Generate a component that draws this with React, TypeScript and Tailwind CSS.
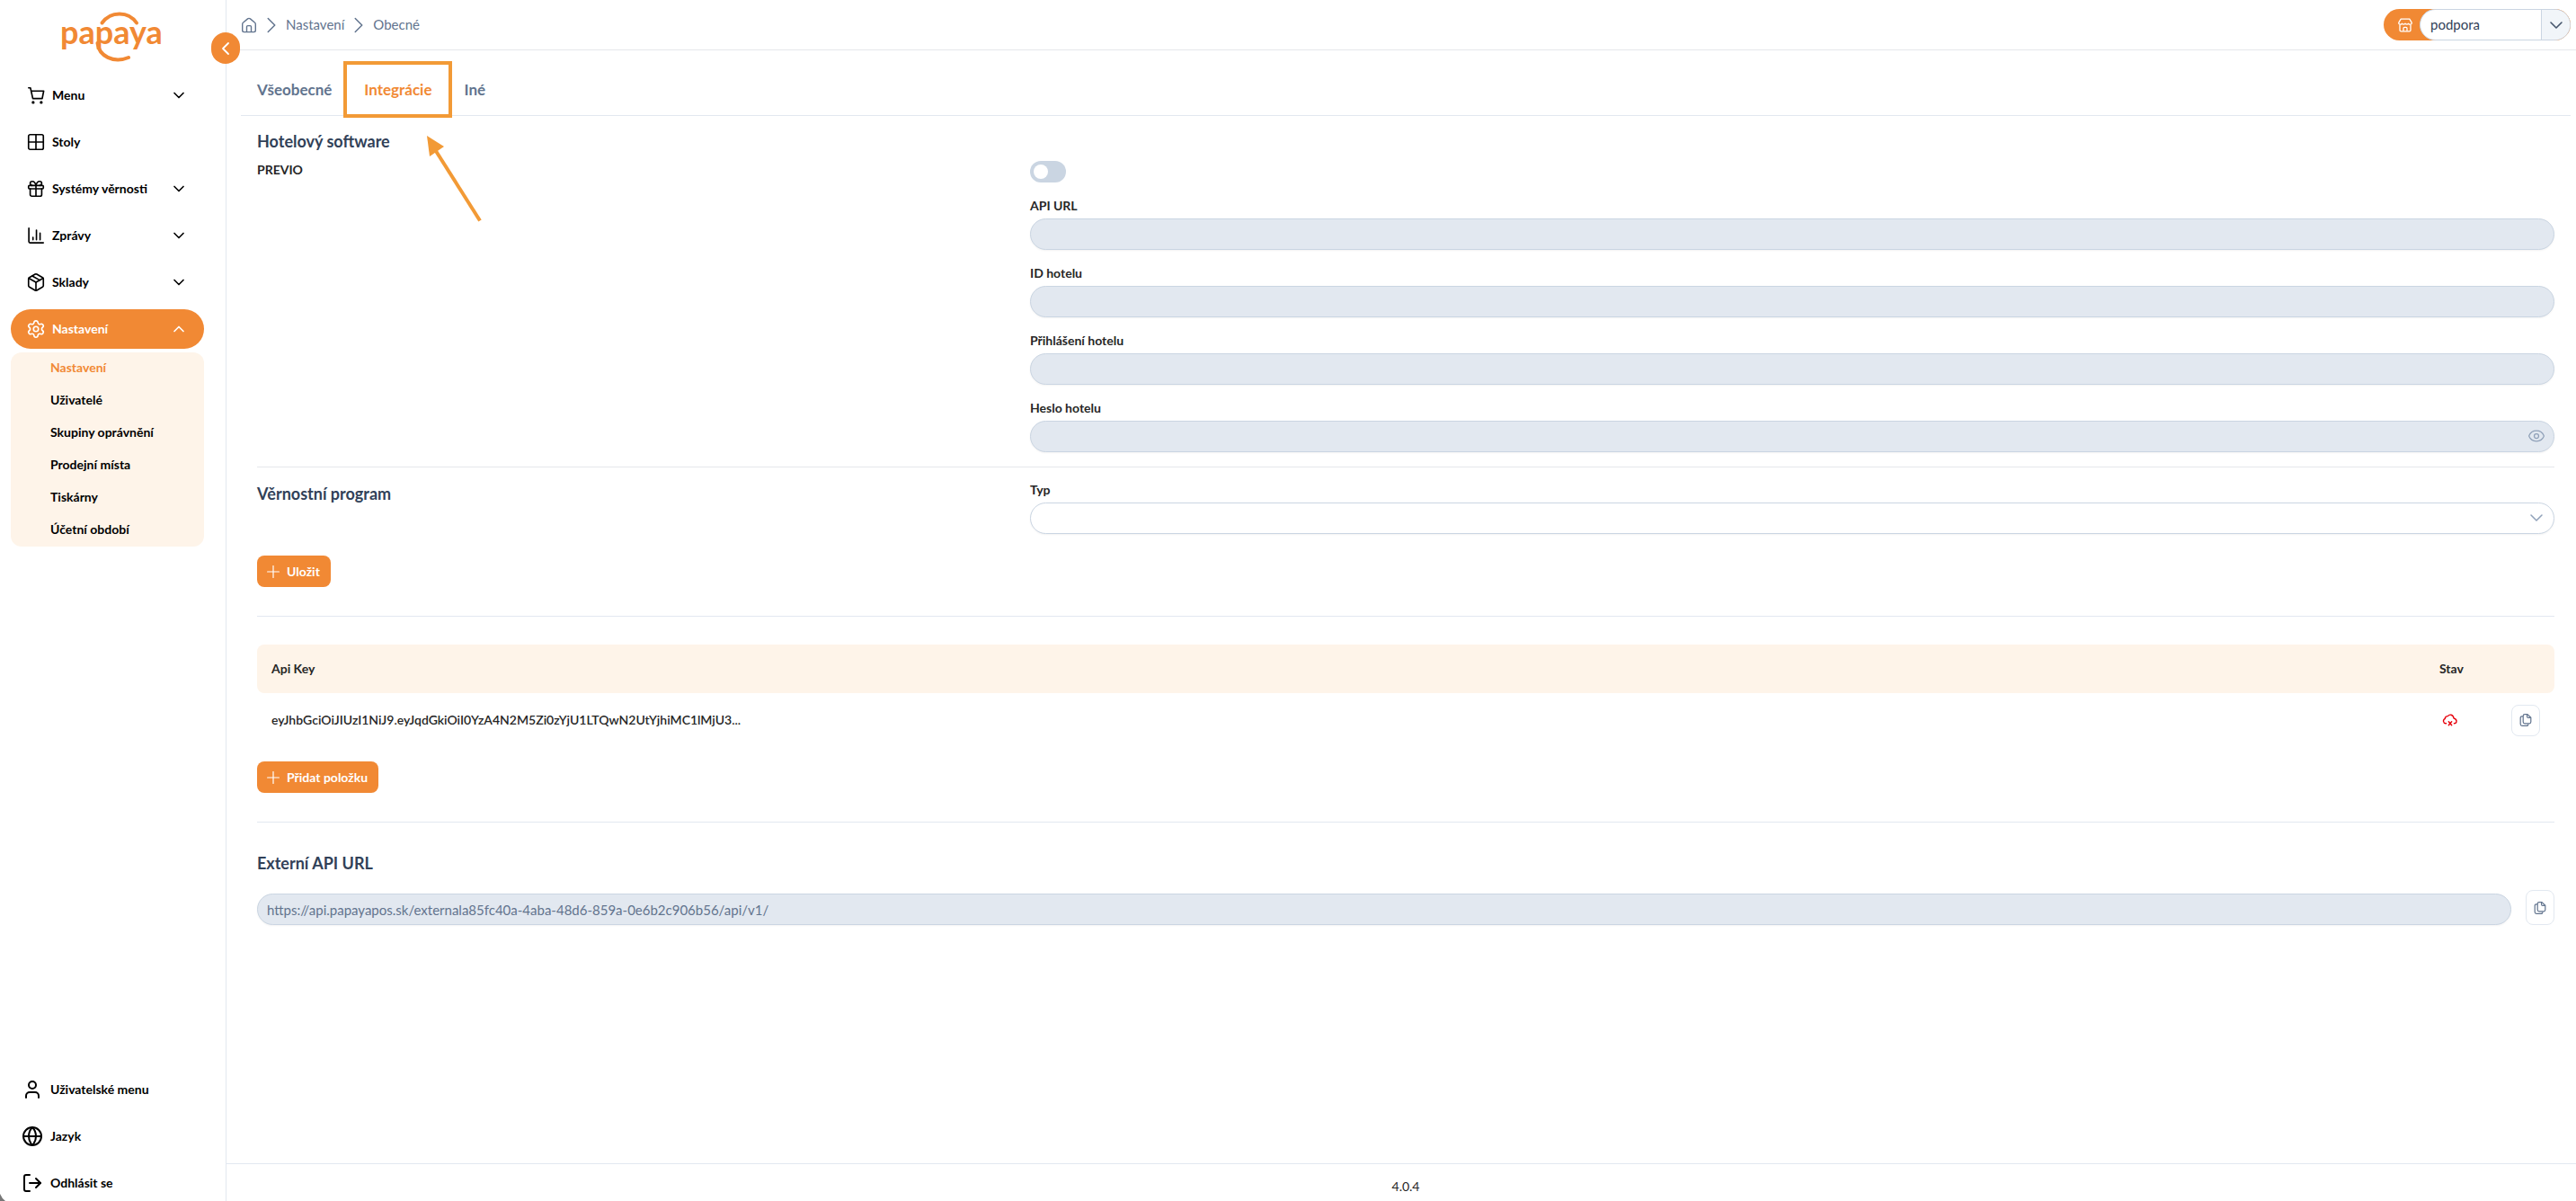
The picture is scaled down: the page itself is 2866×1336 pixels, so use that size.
import React, { useState } from 'react';
import {
  ChevronDown, ChevronLeft, ChevronRight, ChevronUp, Eye, Gift, Globe, Grid2x2, LogOut, Package, Plus, Settings, User,
} from 'lucide-react';

interface IconProps {
  className?: string;
}

const CartIcon: React.FC<IconProps> = ({ className }) => (
  <svg className={className} viewBox="0 0 24 24" fill="none" stroke="currentColor" strokeWidth="1.8" strokeLinecap="round" strokeLinejoin="round">
    <path d="M3 3H5.3L8.2 16H19.6L21.4 6.8H6.2" />
    <circle cx="8.6" cy="20.6" r="1.8" fill="currentColor" stroke="none" />
    <circle cx="18.4" cy="20.6" r="1.8" fill="currentColor" stroke="none" />
  </svg>
);

const ChartIcon: React.FC<IconProps> = ({ className }) => (
  <svg className={className} viewBox="0 0 24 24" fill="none" stroke="currentColor" strokeWidth="1.8" strokeLinecap="round" strokeLinejoin="round">
    <path d="M3.4 3V19.4a1.4 1.4 0 0 0 1.4 1.4H21" />
    <path d="M8.4 14.2v3M12.6 5.4v11.8M17 9v8.2" />
  </svg>
);

const HomeIcon: React.FC<IconProps> = ({ className }) => (
  <svg className={className} viewBox="0 0 18 18" fill="none" stroke="currentColor" strokeWidth="1.4" strokeLinejoin="round">
    <path d="M1.7 8C1.7 7.2 2 6.5 2.7 6L7.6 1.9Q9 .9 10.4 1.9L15.3 6C16 6.5 16.3 7.2 16.3 8V14.8Q16.3 16.6 14.5 16.6H3.5Q1.7 16.6 1.7 14.8Z" />
    <path d="M6.5 16.4V10.8Q6.5 9.6 7.7 9.6H10.3Q11.5 9.6 11.5 10.8V16.4" />
  </svg>
);

const StoreIcon: React.FC<IconProps> = ({ className }) => (
  <svg className={className} viewBox="0 0 16 16" fill="none" stroke="currentColor" strokeWidth="1.3" strokeLinejoin="round">
    <path d="M3.2 1.2H12.8L15.2 5.2Q15.4 7 13.6 7.2Q12.4 7.3 11.7 6.3Q9.9 8 8 6.3Q6.1 8 4.3 6.3Q3.6 7.3 2.4 7.2Q.6 7 .8 5.2Z" />
    <path d="M2 7.4V13.4Q2 14.8 3.4 14.8H12.6Q14 14.8 14 13.4V7.4" />
    <path d="M6 14.6V11.4Q6 10.4 7 10.4H9Q10 10.4 10 11.4V14.6" />
  </svg>
);

const CopyIcon: React.FC<IconProps> = ({ className }) => (
  <svg className={className} viewBox="0 0 14 16" fill="none" stroke="currentColor" strokeWidth="1.2" strokeLinejoin="round">
    <path d="M9 1.6H6Q4.2 1.6 4.2 3.4V10Q4.2 11.8 6 11.8H11Q12.8 11.8 12.8 10V5.2Z" />
    <path d="M8.6 1.8V4.2Q8.6 5.4 9.8 5.4H12.6" />
    <path d="M4 3.8H3Q1.2 3.8 1.2 5.6V12.6Q1.2 14.4 3 14.4H8Q9.8 14.4 9.8 12.4" />
  </svg>
);

const CloudErrorIcon: React.FC<IconProps> = ({ className }) => (
  <svg className={className} viewBox="0 0 18 18" fill="none" stroke="currentColor" strokeWidth="1.4" strokeLinecap="round" strokeLinejoin="round">
    <path d="M4.6 12.8H4A2.7 2.7 0 0 1 3.2 7.6Q3.4 4.6 6.4 4.6Q7.8 2.8 10 3.2Q12.6 3.8 13 7Q16.4 8 16 11Q15.6 12.8 13.4 12.8" />
    <path d="M7.3 10.8L10.7 14.8M10.7 10.8L7.3 14.8" />
  </svg>
);

const Logo = () => (
  <svg className="h-[60px] w-[120px]" viewBox="0 0 120 60" role="img" aria-label="papaya">
    <text x="60" y="38" textAnchor="middle" fontFamily="Lato, sans-serif" fontWeight="700" fontSize="36" fill="#f18934">
      papaya
    </text>
    <g fill="none" stroke="#f18934" strokeWidth="4" strokeLinecap="round">
      <path d="M49.5 14.5C59 1 79 1 88 14.5" />
      <path d="M44.5 37C46 51 62 60 79 53" />
    </g>
  </svg>
);

interface NavItem {
  label: string;
  icon: React.ElementType;
  expandable: boolean;
}

const NAV_ITEMS: NavItem[] = [
  { label: 'Menu', icon: CartIcon, expandable: true },
  { label: 'Stoly', icon: Grid2x2, expandable: false },
  { label: 'Systémy věrnosti', icon: Gift, expandable: true },
  { label: 'Zprávy', icon: ChartIcon, expandable: true },
  { label: 'Sklady', icon: Package, expandable: true },
  { label: 'Nastavení', icon: Settings, expandable: true },
];

const SUB_ITEMS = ['Nastavení', 'Uživatelé', 'Skupiny oprávnění', 'Prodejní místa', 'Tiskárny', 'Účetní období'];

const BOTTOM_ITEMS = [
  { label: 'Uživatelské menu', icon: User },
  { label: 'Jazyk', icon: Globe },
  { label: 'Odhlásit se', icon: LogOut },
];

const TABS = ['Všeobecné', 'Integrácie', 'Iné'];

const Sidebar = () => {
  const active = 'Nastavení';

  return (
    <aside className="relative flex w-[252px] shrink-0 flex-col justify-between border-r border-slate-200 pl-3 pr-6 text-sm font-bold text-black">
      <div>
        <div className="flex h-[84px] justify-center pt-[11px] pl-2">
          <Logo />
        </div>
        <nav className="flex flex-col gap-2">
          {NAV_ITEMS.map(({ label, icon: Icon, expandable }) => {
            const isActive = label === active;
            const Chevron = isActive ? ChevronUp : ChevronDown;
            return (
              <button
                key={label}
                className={`flex h-11 w-full items-center rounded-full pb-px pl-[17px] pr-[18px] ${isActive ? 'bg-[#f18934] text-white' : ''}`}
              >
                <Icon className="h-[22px] w-[22px]" strokeWidth={1.8} />
                <span className="ml-[7px] flex-1 text-left">{label}</span>
                {expandable && <Chevron size={20} />}
              </button>
            );
          })}
        </nav>
        <ul className="mt-1 rounded-xl bg-[#fef4e9]">
          {SUB_ITEMS.map((label) => (
            <li key={label}>
              <a href="#" className={`flex h-9 items-center pb-0.5 pl-11 ${label === active ? 'text-[#f18934]' : ''}`}>{label}</a>
            </li>
          ))}
        </ul>
      </div>

      <div className="flex flex-col gap-3">
        {BOTTOM_ITEMS.map(({ label, icon: Icon }) => (
          <button key={label} className="flex h-10 items-center gap-2 pl-3">
            <Icon size={24} />
            {label}
          </button>
        ))}
      </div>

      <button
        aria-label="Toggle sidebar"
        className="absolute -right-4 top-9 flex h-[35px] w-8 items-center justify-center rounded-full bg-[#f18934] text-white"
      >
        <ChevronLeft size={24} strokeWidth={1.8} />
      </button>
    </aside>
  );
};

const Header = () => (
  <header className="flex h-14 items-center justify-between border-b border-gray-200 pl-4 pr-[6px]">
    <div className="flex items-center text-[15px] text-slate-500">
      <a href="#" aria-label="Home"><HomeIcon className="h-[18px] w-[18px]" /></a>
      <ChevronRight size={30} strokeWidth={1.2} className="mx-px text-slate-500" />
      <a href="#">Nastavení</a>
      <ChevronRight size={30} strokeWidth={1.2} className="mx-px text-slate-500" />
      <a href="#">Obecné</a>
    </div>
    <div className="flex h-[35px] items-center rounded-full bg-[#f18934]">
      <StoreIcon className="mx-4 h-4 w-4 text-white" />
      <div className="-ml-2 flex h-full overflow-hidden rounded-full border border-slate-300 bg-white">
        <input aria-label="Store" defaultValue="podpora" className="w-[134px] pl-[11px] text-[15px] text-slate-700 outline-none" />
        <button aria-label="Open store list" className="flex w-8 items-center justify-center border-l border-slate-300 bg-slate-100 text-slate-600">
          <ChevronDown size={24} strokeWidth={1.6} />
        </button>
      </div>
    </div>
  </header>
);

const Field: React.FC<{ id: string; label: string; password?: boolean }> = ({ id, label, password }) => (
  <div className="mt-4">
    <label htmlFor={id} className="block text-sm font-bold text-neutral-800">{label}</label>
    <div className="relative mt-1">
      <input
        id={id}
        type={password ? 'password' : 'text'}
        disabled
        className="block h-[35px] w-full rounded-full border border-slate-300 bg-slate-200 px-3 shadow-xs"
      />
      {password && <Eye size={20} strokeWidth={1.5} className="absolute right-2.5 top-[7px] text-slate-400" />}
    </div>
  </div>
);

const AddButton: React.FC<{ children: React.ReactNode }> = ({ children }) => (
  <button className="flex h-[35px] items-center gap-1 rounded-lg bg-[#f18934] pl-[7px] pr-3 text-sm font-bold text-white">
    <Plus size={22} strokeWidth={1.3} />
    {children}
  </button>
);

const Divider = () => <hr className="mt-8 mb-[31px] border-slate-200" />;

const heading = 'text-lg leading-7 font-bold text-slate-700';

export default function App() {
  const [tab, setTab] = useState('Integrácie');

  return (
    <div className="flex min-h-screen bg-white font-['Lato',sans-serif]">
      <Sidebar />
      <div className="flex min-w-0 flex-1 flex-col">
        <Header />

        <main className="flex-1 pt-4 pl-4 pr-[6px]">
          <div className="flex h-[57px] border-b border-slate-200">
            {TABS.map((name) => (
              <button
                key={name}
                onClick={() => setTab(name)}
                className={`relative px-[18px] text-[17px] font-bold ${name === tab ? 'text-[#f18934]' : 'text-slate-500'}`}
              >
                {name}
                {name === 'Integrácie' && (
                  <>
                    <span className="pointer-events-none absolute -top-1 -bottom-[3px] -inset-x-[5px] border-4 border-[#f29a36]" />
                    <svg className="pointer-events-none absolute left-[85px] top-[78px] h-[98px] w-[66px]" viewBox="0 0 66 98">
                      <path d="M13 18L62 95.5" stroke="#f29a36" strokeWidth="4" />
                      <path d="M3 1L22 13L6 24Z" fill="#f29a36" />
                    </svg>
                  </>
                )}
              </button>
            ))}
          </div>

          <div className="px-[18px]">
            <section className="border-b border-gray-200 pt-[14px] pb-4">
              <h2 className={heading}>Hotelový software</h2>
              <div className="mt-2 grid grid-cols-3 gap-6">
                <label htmlFor="previo" className="text-sm font-bold text-neutral-800">PREVIO</label>
                <div className="col-span-2">
                  <input
                    id="previo"
                    type="checkbox"
                    role="switch"
                    className="block h-6 w-10 appearance-none rounded-full bg-slate-300 p-1 before:block before:size-4 before:rounded-full before:bg-white checked:bg-[#f18934] checked:before:translate-x-4"
                  />
                  <Field id="api-url" label="API URL" />
                  <Field id="hotel-id" label="ID hotelu" />
                  <Field id="hotel-login" label="Přihlášení hotelu" />
                  <Field id="hotel-password" label="Heslo hotelu" password />
                </div>
              </div>
            </section>

            <section className="grid grid-cols-3 gap-6 pt-[15px]">
              <h2 className={heading}>Věrnostní program</h2>
              <div className="col-span-2">
                <label htmlFor="type" className="block text-sm font-bold text-neutral-800">Typ</label>
                <div className="relative mt-1">
                  <select id="type" className="block h-[35px] w-full appearance-none rounded-full border border-slate-300 bg-white px-3 shadow-xs" />
                  <ChevronDown size={24} strokeWidth={1.5} className="pointer-events-none absolute right-2 top-[5px] text-slate-400" />
                </div>
              </div>
            </section>

            <div className="mt-6">
              <AddButton>Uložit</AddButton>
            </div>

            <Divider />

            <table className="w-full table-fixed text-left text-sm font-bold text-neutral-800">
              <thead>
                <tr className="h-[54px] bg-[#fef4e9]">
                  <th className="rounded-l-lg px-4">Api Key</th>
                  <th className="w-20 pl-4">Stav</th>
                  <th className="w-16 rounded-r-lg" />
                </tr>
              </thead>
              <tbody>
                <tr className="h-[60px]">
                  <td className="px-4 font-semibold">eyJhbGciOiJIUzI1NiJ9.eyJqdGkiOiI0YzA4N2M5Zi0zYjU1LTQwN2UtYjhiMC1lMjU3...</td>
                  <td className="pl-4">
                    <div className="flex w-6 justify-center">
                      <CloudErrorIcon className="h-[18px] w-[18px] text-red-600" />
                    </div>
                  </td>
                  <td className="px-4">
                    <button aria-label="Copy key" className="flex h-[35px] w-8 items-center justify-center rounded-lg border border-slate-200 text-slate-500">
                      <CopyIcon className="h-4 w-[14px]" />
                    </button>
                  </td>
                </tr>
              </tbody>
            </table>

            <div className="mt-4">
              <AddButton>Přidat položku</AddButton>
            </div>

            <Divider />

            <h2 className={heading}>Externí API URL</h2>
            <div className="mt-4 flex items-end gap-4">
              <input
                aria-label="Externí API URL"
                disabled
                defaultValue="https://api.papayapos.sk/externala85fc40a-4aba-48d6-859a-0e6b2c906b56/api/v1/"
                className="h-[35px] min-w-0 flex-1 rounded-full border border-slate-300 bg-slate-200 px-[10px] text-[15px] text-slate-500 shadow-xs"
              />
              <button aria-label="Copy URL" className="flex h-[39px] w-8 items-center justify-center rounded-lg border border-slate-200 text-slate-500">
                <CopyIcon className="h-4 w-[14px]" />
              </button>
            </div>
          </div>
        </main>

        <footer className="h-[42px] border-t border-slate-200 pt-[15px] pl-4 pr-[6px] text-center text-sm text-neutral-800">
          4.0.4
        </footer>
      </div>
      <svg className="absolute bottom-0 left-0 h-2 w-[6px]" viewBox="0 0 6 8" aria-hidden="true">
        <path d="M0 0Q2 5 6 8H0Z" fill="#777" />
      </svg>
    </div>
  );
}
